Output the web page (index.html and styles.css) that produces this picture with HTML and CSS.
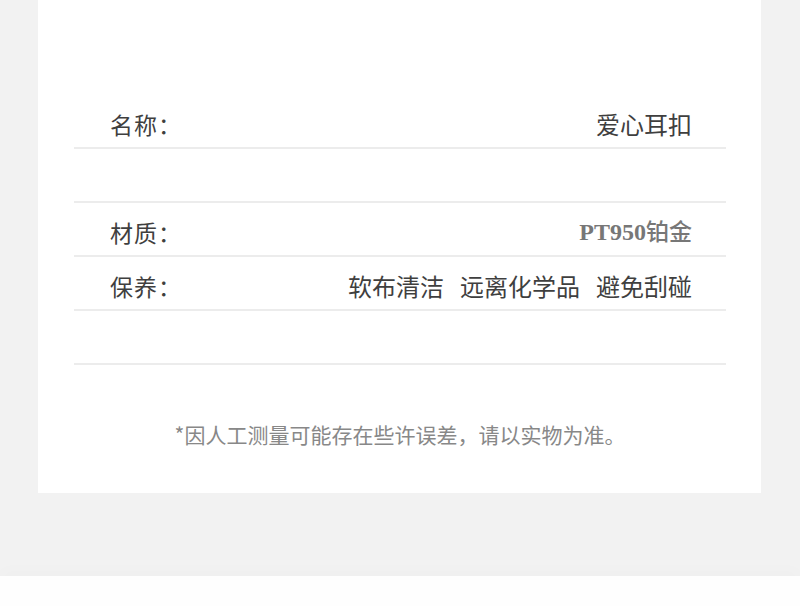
FILE: index.html
```html
<!DOCTYPE html>
<html lang="zh-CN">
<head>
    <meta charset="UTF-8">
    <meta name="viewport" content="width=device-width, initial-scale=1.0">
    <title>产品信息</title>
    <link rel="stylesheet" href="styles.css">
</head>
<body>
    <div class="page">
        <div class="info-card">
            <div class="info-row">
                <span class="label">名称：</span>
                <span class="value">爱心耳扣</span>
            </div>
            <div class="info-row empty"></div>
            <div class="info-row">
                <span class="label">材质：</span>
                <span class="value metal">PT950<span class="metal-cn">铂金</span></span>
            </div>
            <div class="info-row">
                <span class="label">保养：</span>
                <span class="value care">
                    <span>软布清洁</span>
                    <span>远离化学品</span>
                    <span>避免刮碰</span>
                </span>
            </div>
            <div class="info-row empty"></div>
            <p class="note">*因人工测量可能存在些许误差，请以实物为准。</p>
        </div>
        <div class="bottom-strip"></div>
    </div>
</body>
</html>
```

FILE: styles.css
```css
body {
    margin: 0;
    background-color: #f2f2f2;
    font-family: "Noto Sans CJK SC", "Noto Sans", sans-serif;
    color: #444;
}

.page {
    display: flex;
    flex-direction: column;
    height: 606px;
}

.info-card {
    background-color: #ffffff;
    margin: 0 39px 0 38px;
    height: 493px;
    padding: 95px 35px 0 36px;
    box-sizing: border-box;
}

.info-row {
    display: flex;
    justify-content: space-between;
    align-items: flex-end;
    height: 54px;
    padding: 0 34px 9px 36px;
    border-bottom: 2px solid #ececec;
    box-sizing: border-box;
}

.label,
.value {
    font-size: 23px;
    line-height: 28px;
    color: #3f3f3f;
}

.label {
    letter-spacing: 1px;
}

.value {
    font-size: 24px;
}

.care {
    display: flex;
    gap: 16px;
}

.metal {
    font-family: "Liberation Serif", "Noto Sans CJK SC", serif;
    font-weight: bold;
    color: #777;
}

.metal-cn {
    font-family: "Noto Sans CJK SC", sans-serif;
    font-weight: 500;
    font-size: 23px;
}

.note {
    margin: 55px 0 0;
    text-align: center;
    font-size: 21px;
    line-height: 28px;
    color: #888;
}

.bottom-strip {
    margin-top: auto;
    height: 30px;
    background-color: #fefefe;
    box-shadow: 0 -8px 14px rgba(0, 0, 0, 0.012);
}
```
